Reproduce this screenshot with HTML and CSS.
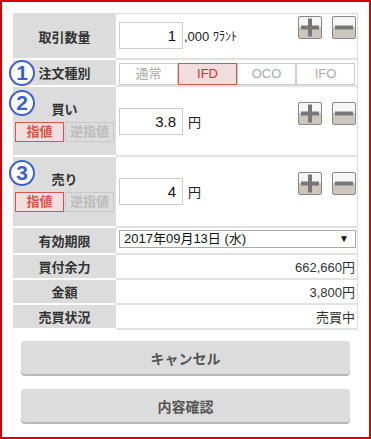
FILE: index.html
```html
<!DOCTYPE html>
<html>
<head>
    <title>注文入力</title>
    <link rel="stylesheet" href="styles.css">
</head>
<body>
    <div class="frame">
        <div class="form">
            <div class="row row-qty">
                <div class="lbl">取引数量</div>
                <div class="val val-step">
                    <div class="entry">
                        <div class="input">1</div>
                        <span class="unit">,000 <small>ﾜﾗﾝﾄ</small></span>
                    </div>
                    <div class="steps">
                        <span class="step"><svg viewBox="0 0 22 21"><rect x="2" y="8.5" width="18" height="4"/><rect x="9" y="1.5" width="4" height="18"/></svg></span>
                        <span class="step"><svg viewBox="0 0 22 21"><rect x="2" y="8.5" width="18" height="4"/></svg></span>
                    </div>
                </div>
            </div>
            <div class="row row-type">
                <div class="lbl"><span class="badge">1</span>注文種別</div>
                <div class="val">
                    <div class="tabs">
                        <span class="tab">通常</span>
                        <span class="tab on">IFD</span>
                        <span class="tab">OCO</span>
                        <span class="tab">IFO</span>
                    </div>
                </div>
            </div>
            <div class="row row-side">
                <div class="lbl lbl-side">
                    <span class="badge">2</span>
                    <span class="side">買い</span>
                    <div class="kinds">
                        <span class="kind on">指値</span>
                        <span class="kind">逆指値</span>
                    </div>
                </div>
                <div class="val val-step">
                    <div class="entry">
                        <div class="input">3.8</div>
                        <span class="yen">円</span>
                    </div>
                    <div class="steps">
                        <span class="step"><svg viewBox="0 0 22 21"><rect x="2" y="8.5" width="18" height="4"/><rect x="9" y="1.5" width="4" height="18"/></svg></span>
                        <span class="step"><svg viewBox="0 0 22 21"><rect x="2" y="8.5" width="18" height="4"/></svg></span>
                    </div>
                </div>
            </div>
            <div class="row row-side row-sell">
                <div class="lbl lbl-side">
                    <span class="badge">3</span>
                    <span class="side">売り</span>
                    <div class="kinds">
                        <span class="kind on">指値</span>
                        <span class="kind">逆指値</span>
                    </div>
                </div>
                <div class="val val-step">
                    <div class="entry">
                        <div class="input">4</div>
                        <span class="yen">円</span>
                    </div>
                    <div class="steps">
                        <span class="step"><svg viewBox="0 0 22 21"><rect x="2" y="8.5" width="18" height="4"/><rect x="9" y="1.5" width="4" height="18"/></svg></span>
                        <span class="step"><svg viewBox="0 0 22 21"><rect x="2" y="8.5" width="18" height="4"/></svg></span>
                    </div>
                </div>
            </div>
            <div class="row row-date">
                <div class="lbl">有効期限</div>
                <div class="val">
                    <div class="select">2017年09月13日 (水)<span class="arrow">▼</span></div>
                </div>
            </div>
            <div class="row row-info">
                <div class="lbl">買付余力</div>
                <div class="val num">662,660円</div>
            </div>
            <div class="row row-info">
                <div class="lbl">金額</div>
                <div class="val num">3,800円</div>
            </div>
            <div class="row row-info">
                <div class="lbl">売買状況</div>
                <div class="val num">売買中</div>
            </div>
        </div>
        <div class="actions">
            <button>キャンセル</button>
            <button>内容確認</button>
        </div>
    </div>
</body>
</html>
```

FILE: styles.css
```css
body {
    margin: 0;
    padding: 0;
    font-family: "Liberation Sans", "Noto Sans CJK JP", sans-serif;
    color: #333;
}
.frame {
    width: 371px;
    height: 439px;
    box-sizing: border-box;
    border: 2px solid #d40000;
    padding: 11px;
}
.form {
    width: 345px;
    box-sizing: border-box;
    border-top: 1px solid #ddd;
    border-right: 1px solid #ddd;
}
.row {
    display: grid;
    grid-template-columns: 103px 1fr;
    box-sizing: border-box;
}
.lbl {
    position: relative;
    background-color: #dcdcdc;
    border-bottom: 2px solid #fff;
    display: flex;
    justify-content: center;
    align-items: center;
    font-size: 13px;
    font-weight: bold;
    color: #333;
}
.val {
    border-bottom: 2px solid #e2e2e2;
    padding-left: 3px;
    padding-right: 1px;
}
.row-qty { height: 46px; }
.row-type { height: 27px; }
.row-side { height: 70px; }
.row-sell { height: 71px; }
.row-date { height: 27px; }
.row-info { height: 25px; }

.badge {
    position: absolute;
    left: -4px;
    top: 3px;
    width: 26px;
    height: 26px;
    box-sizing: border-box;
    border: 2px solid #3d5fd2;
    border-radius: 50%;
    background-color: #fff;
    color: #3d5fd2;
    font-size: 21px;
    font-weight: bold;
    line-height: 22px;
    text-align: center;
}
.row-type .badge {
    top: 0;
}

.val-step {
    display: flex;
    justify-content: space-between;
    align-items: flex-start;
    padding-top: 2px;
}
.row-side .val-step {
    padding-top: 15px;
}
.entry {
    display: flex;
    align-items: center;
    margin-top: 6px;
}
.input {
    width: 64px;
    height: 27px;
    box-sizing: border-box;
    border: 1px solid #ccc;
    padding-right: 6px;
    text-align: right;
    font-size: 15px;
    line-height: 25px;
    color: #111;
}
.unit {
    margin-left: 1px;
    font-size: 13px;
    color: #222;
}
.unit small {
    font-size: 12px;
}
.yen {
    margin-left: 5px;
    font-size: 13px;
    color: #222;
}
.steps {
    display: flex;
    gap: 10px;
}
.step {
    width: 24px;
    height: 23px;
    box-sizing: border-box;
    border: 1px solid #888;
    border-radius: 2px;
    background: linear-gradient(#f6f6f6 50%, #cdc6bd 50%);
    display: flex;
}
.step svg {
    width: 22px;
    height: 21px;
    fill: #777;
}

.row-type .val {
    padding-top: 3px;
}
.tabs {
    display: flex;
}
.tab {
    width: 59px;
    height: 22px;
    box-sizing: border-box;
    border: 1px solid #ccc;
    background-color: #fff;
    color: #aaa;
    font-size: 13px;
    line-height: 20px;
    text-align: center;
}
.tab.on {
    border-color: #d9534f;
    background-color: #f2dede;
    color: #c9302c;
}

.lbl-side {
    flex-direction: column;
    justify-content: flex-start;
    padding-top: 15px;
}
.side {
    line-height: 16px;
}
.kinds {
    display: flex;
    gap: 1px;
    margin-top: 4px;
}
.kind {
    width: 49px;
    height: 20px;
    box-sizing: border-box;
    border: 1px solid #c8c8c8;
    color: #bbb;
    font-size: 13px;
    line-height: 18px;
    text-align: center;
}
.kind.on {
    border-color: #d9534f;
    background-color: #f2dede;
    color: #d9534f;
}

.row-date .val {
    padding-top: 2px;
}
.select {
    height: 18px;
    box-sizing: border-box;
    border: 1px solid #a9a9a9;
    padding-left: 4px;
    font-size: 13px;
    line-height: 16px;
    color: #111;
    display: flex;
    justify-content: space-between;
}
.arrow {
    font-size: 10px;
    padding-right: 6px;
}
.num {
    display: flex;
    justify-content: flex-end;
    align-items: center;
    padding-right: 2px;
    font-size: 13px;
    color: #333;
}

.actions {
    display: flex;
    flex-direction: column;
    gap: 13px;
    padding: 11px 8px 0;
}
.actions button {
    height: 33px;
    border: none;
    border-radius: 4px;
    background-color: #dcdcdc;
    box-shadow: 0 2px 0 #b8b8b8;
    font-family: "Liberation Sans", "Noto Sans CJK JP", sans-serif;
    font-size: 14px;
    font-weight: bold;
    color: #555;
    margin-bottom: 2px;
}
```
